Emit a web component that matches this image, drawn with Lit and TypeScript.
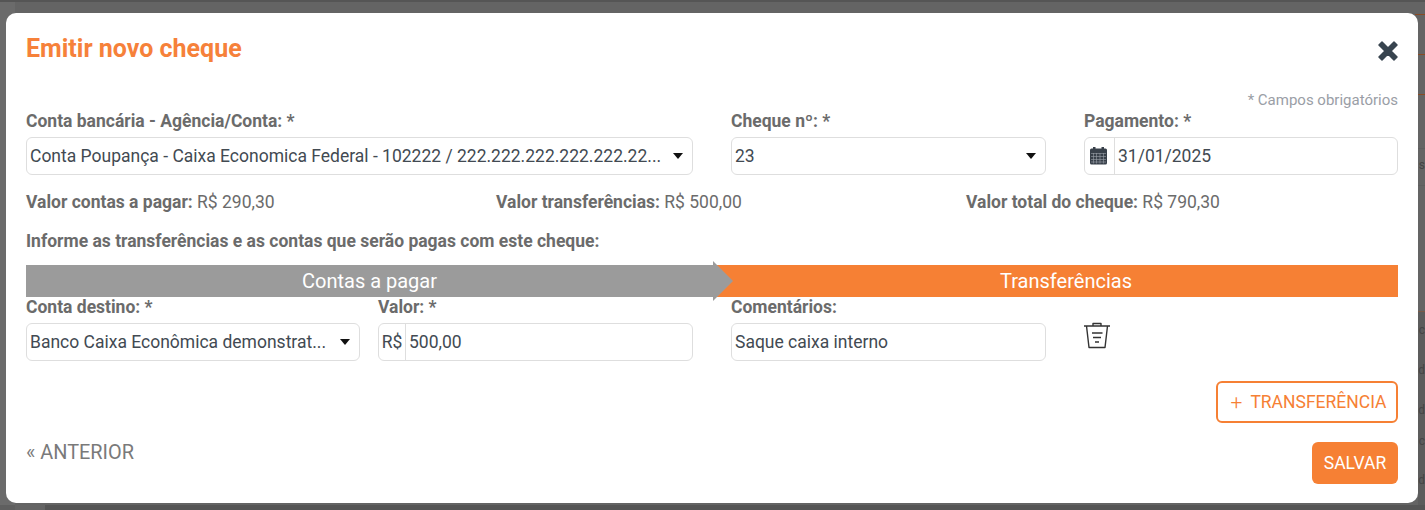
import { LitElement, html, css } from "lit";
import { customElement } from "lit/decorators.js";

const GHOST: Array<[string, number]> = [["s", 158], ["c", 323], ["d", 363], ["d", 403], ["c", 434], ["d", 473]];

@customElement("app-root")
export class AppRoot extends LitElement {
  static styles = css`
    :host { display: block; width: 1425px; height: 510px; overflow: hidden; background: #646464; font-family: Roboto, "Liberation Sans", sans-serif; color: #4a4f55; }
    * { box-sizing: border-box; }
    .page {
      padding: 13px 7px 7px 6px; height: 510px; position: relative;
      background:
        linear-gradient(#555, #555) 0 0 / 100% 2px no-repeat,
        linear-gradient(#555, #555) 45px 505px / 100% 5px no-repeat,
        linear-gradient(#5f5f5f, #5f5f5f) 0 505px / 15px 5px no-repeat,
        linear-gradient(#8a4a24, #8a4a24) 1415px 14px / 10px 1px no-repeat,
        linear-gradient(#8a4a24, #8a4a24) 1418px 54px / 7px 1px no-repeat,
        linear-gradient(#8a4a24, #8a4a24) 1418px 94px / 7px 1px no-repeat,
        linear-gradient(#7a5a48, #7a5a48) 1418px 311px / 7px 1px no-repeat,
        linear-gradient(#5e5e5e, #5e5e5e) 1418px 148px / 7px 1px no-repeat,
        linear-gradient(#5e5e5e, #5e5e5e) 1418px 185px / 7px 1px no-repeat,
        linear-gradient(#5c5c5c, #5c5c5c) 1418px 312px / 7px 198px no-repeat,
        linear-gradient(#6b6b6b, #6b6b6b) 0 0 / 15px 100% no-repeat,
        #646464;
    }
    .ghost { position: absolute; right: 0; top: 0; width: 7px; height: 510px; color: #454545; font-size: 12px; line-height: 14px; }
    .ghost span { position: absolute; right: 0; }
    .modal { background: #fff; border-radius: 10px; height: 490px; padding: 20px; display: flex; flex-direction: column; position: relative; }
    .modal > * { flex: none; }
    .head { display: flex; justify-content: space-between; align-items: flex-start; height: 60px; }
    h1 { margin: 1px 0 0; color: #f6813a; font-size: 25px; font-weight: 700; line-height: 30px; }
    .close { margin: 8px 0 0 0; width: 20px; height: 20px; display: block; }
    .req { text-align: right; color: #9a9ea6; font-size: 15px; line-height: 16px; height: 16px; margin-top: -1px; }
    label { display: block; color: #6b6b6b; font-weight: 700; font-size: 17.5px; line-height: 22px; }
    .row1 { display: flex; gap: 38px; margin-top: 2px; }
    .f1 { width: 667px; } .f2 { width: 315px; } .f3 { width: 314px; }
    .ctl { margin-top: 5px; height: 38px; border: 1px solid #dedede; border-radius: 6px; background: #fff; display: flex; align-items: center; font-size: 17.5px; color: #424a52; padding: 0 3px; white-space: nowrap; overflow: hidden; }
    .ctl .txt { flex: 1; overflow: hidden; }
    .caret { width: 0; height: 0; border-left: 5px solid transparent; border-right: 5px solid transparent; border-top: 6px solid #111; margin: 0 6px 0 6px; flex: none; }
    .addon { align-self: stretch; display: flex; align-items: center; justify-content: center; border-right: 1px solid #dedede; margin-left: -3px; margin-right: 3px; flex: none; }
    .a-cal { width: 30px; padding-right: 2px; }
    .a-cur { width: 27px; }
    .totals { display: flex; margin-top: 17px; line-height: 20px; font-size: 17.5px; color: #6b6b6b; }
    .totals b { font-weight: 700; }
    .totals span { display: block; }
    .t1 { width: 470px; } .t2 { width: 470px; }
    .inform { margin-top: 19px; font-weight: 700; font-size: 17.5px; line-height: 20px; color: #6b6b6b; }
    .steps { display: flex; margin-top: 14px; height: 32px; position: relative; color: #fff; font-size: 20px; text-align: center; line-height: 32px; }
    .s1 { width: 687px; background: #9b9b9b; }
    .s2 { flex: 1; background: #f68034; padding-left: 21px; }
    .arrow { position: absolute; left: 686px; top: -4px; display: block; }
    .row2 { display: flex; }
    .row2 label { margin-top: -1px; }
    .d1 { width: 334px; margin-right: 18px; }
    .d2 { width: 315px; margin-right: 38px; }
    .d3 { width: 315px; margin-right: 38px; }
    .trash { margin: 25px 0 0 -1px; display: block; }
    .add { display: flex; justify-content: flex-end; margin-top: 20px; }
    .btn-o { height: 42px; width: 182px; border: 2px solid #f68034; border-radius: 6px; color: #f68034; background: #fff; font: 17.5px Roboto, sans-serif; display: flex; align-items: center; justify-content: center; gap: 8px; padding: 0 0 0 3px; }
    .plus { display: block; font-size: 21px; font-weight: 300; line-height: 21px; }
    .foot { display: flex; justify-content: space-between; margin-top: 19px; }
    .prev { color: #7a7a7a; font-size: 19.9px; line-height: 22px; }
    .save { width: 86px; height: 42px; background: #f68034; color: #fff; border: none; border-radius: 6px; font: 17.5px Roboto, sans-serif; padding: 0; }
  `;
  render() {
    return html`<div class="page">
      <div class="ghost">${GHOST.map(([c, y]) => html`<span style="top:${y}px">${c}</span>`)}</div>
      <div class="modal">
      <div class="head">
        <h1>Emitir novo cheque</h1>
        <svg class="close" viewBox="0 0 20 20"><path d="M4 1 L10 7 L16 1 L19 4 L13 10 L19 16 L16 19 L10 13 L4 19 L1 16 L7 10 L1 4 Z" fill="#38444f" stroke="#38444f" stroke-width="1.5" stroke-linejoin="round"/></svg>
      </div>
      <div class="req">* Campos obrigatórios</div>
      <div class="row1">
        <div class="f1"><label>Conta bancária - Agência/Conta: *</label><div class="ctl"><span class="txt">Conta Poupança - Caixa Economica Federal - 102222 / 222.222.222.222.222.22...</span><i class="caret"></i></div></div>
        <div class="f2"><label>Cheque nº: *</label><div class="ctl"><span class="txt">23</span><i class="caret"></i></div></div>
        <div class="f3"><label>Pagamento: *</label><div class="ctl"><span class="addon a-cal"><svg width="17" height="18" viewBox="0 0 17 18"><rect x="0" y="1.5" width="17" height="16" rx="1.5" fill="#38404a"/><rect x="3" y="0" width="2.5" height="3" fill="#38404a"/><rect x="11.5" y="0" width="2.5" height="3" fill="#38404a"/><path d="M1 6.5H16M1 9.5H16M1 12.5H16M1 15H16M3.5 6V16.5M6.5 6V16.5M10 6V16.5M13.5 6V16.5" stroke="#9aa0a8" stroke-width=".6"/></svg></span><span class="txt">31/01/2025</span></div></div>
      </div>
      <div class="totals">
        <span class="t1"><b>Valor contas a pagar:</b> R$ 290,30</span>
        <span class="t2"><b>Valor transferências:</b> R$ 500,00</span>
        <span><b>Valor total do cheque:</b> R$ 790,30</span>
      </div>
      <div class="inform">Informe as transferências e as contas que serão pagas com este cheque:</div>
      <div class="steps">
        <div class="s1">Contas a pagar</div><div class="s2">Transferências</div>
        <svg class="arrow" width="24" height="40" viewBox="0 0 24 40"><path d="M1 0 L21 20 L1 40 Z" fill="#9b9b9b"/></svg>
      </div>
      <div class="row2">
        <div class="d1"><label>Conta destino: *</label><div class="ctl"><span class="txt">Banco Caixa Econômica demonstrat...</span><i class="caret"></i></div></div>
        <div class="d2"><label>Valor: *</label><div class="ctl"><span class="addon a-cur">R$</span><span class="txt">500,00</span></div></div>
        <div class="d3"><label>Comentários:</label><div class="ctl"><span class="txt">Saque caixa interno</span></div></div>
        <svg class="trash" width="28" height="27" viewBox="0 0 28 27" fill="none" stroke="#333" stroke-width="1.4" stroke-linejoin="round"><path d="M1 4H27M10 4V1.5H18V4M3.5 4 L6 25.5H22L24.5 4M9 11H19.5M10 15.5H18M12 20H16"/></svg>
      </div>
      <div class="add"><button class="btn-o"><span class="plus">+</span><span>TRANSFERÊNCIA</span></button></div>
      <div class="foot"><div class="prev">« ANTERIOR</div><button class="save">SALVAR</button></div>
    </div></div>`;
  }
}
